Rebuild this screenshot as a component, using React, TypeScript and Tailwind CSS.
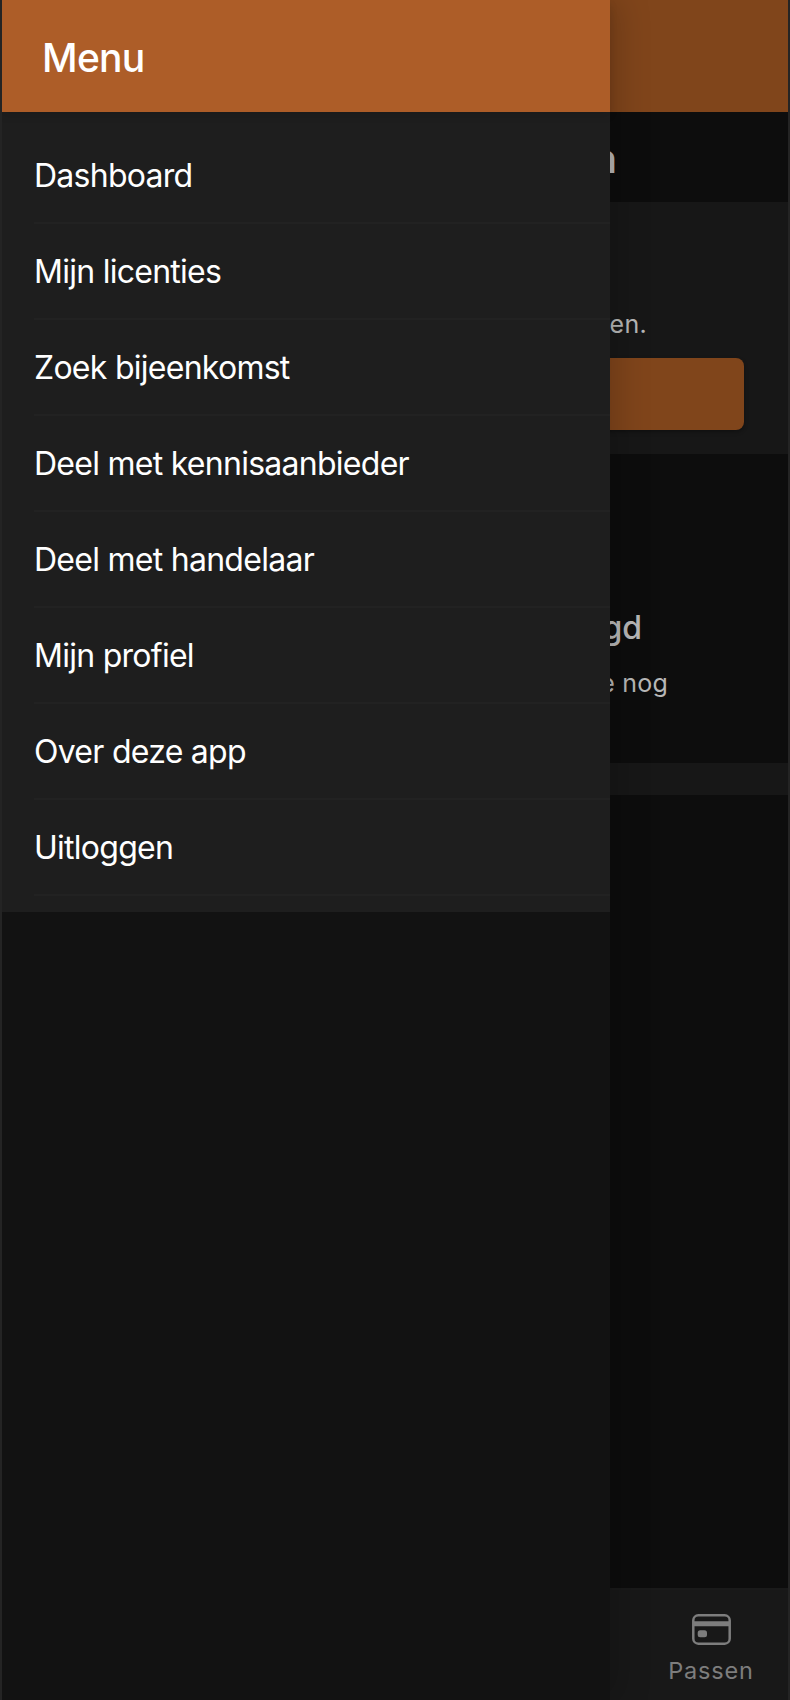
const items = [
  "Dashboard",
  "Mijn licenties",
  "Zoek bijeenkomst",
  "Deel met kennisaanbieder",
  "Deel met handelaar",
  "Mijn profiel",
  "Over deze app",
  "Uitloggen",
];

function Drawer() {
  return (
    <aside className="z-10 flex w-[608px] shrink-0 flex-col bg-[#121212] shadow-[8px_0_32px_rgba(0,0,0,0.18)]">
      <header className="z-10 flex h-28 shrink-0 items-center bg-[#ad5d28] pt-[3px] pl-10 shadow-[0_4px_8px_rgba(0,0,0,0.1)]">
        <h1 className="text-[39px] leading-none font-medium tracking-[-0.7px]">Menu</h1>
      </header>
      <nav className="bg-[#1e1e1e] py-4">
        {items.map((label) => (
          <a
            key={label}
            className="ml-8 flex h-24 items-center border-b-2 border-[#222222] pt-0.5 text-[32px] tracking-[-0.73px]"
          >
            {label}
          </a>
        ))}
      </nav>
    </aside>
  );
}

function Page() {
  return (
    <main className="flex w-[178px] shrink-0 flex-col overflow-hidden bg-[#0d0d0d] text-[#b7b7b7]">
      <div className="h-28 shrink-0 bg-[#80451b]" />
      <div className="flex h-[90px] shrink-0 items-center justify-end pt-1 pr-[171px] text-[40px] font-semibold">
        <span>n</span>
      </div>
      <section className="flex h-[252px] shrink-0 flex-col bg-[#171717]">
        <p className="mt-[104px] flex h-9 justify-end pr-[141px] text-[25px] leading-9 tracking-[0.3px]">
          en.
        </p>
        <button className="mt-4 -ml-5 h-[72px] w-[154px] rounded-lg bg-[#80451b] shadow-[0_2px_4px_rgba(0,0,0,0.3)]" />
      </section>
      <section className="flex h-[309px] shrink-0 flex-col">
        <h2 className="mt-[154px] flex h-10 justify-end pr-[146px] text-[32px] leading-10 font-medium">
          gd
        </h2>
        <p className="mt-[17px] flex h-9 justify-end pr-[120px] text-[25px] leading-9 tracking-[0.2px] whitespace-nowrap">
          e nog
        </p>
      </section>
      <div className="h-8 shrink-0 bg-[#171717]" />
      <div className="grow" />
      <footer className="flex h-28 shrink-0 flex-col items-center border-t-2 border-[#1a1a1a] bg-[#181818] pt-6 pl-6 text-[#7d7d7d]">
        <svg width="39" height="31" viewBox="0 0 39 31" fill="none">
          <rect x="1.3" y="1.3" width="36.4" height="28.4" rx="5" stroke="currentColor" strokeWidth="2.5" />
          <path d="M1.5 9.7H37.5" stroke="currentColor" strokeWidth="5" />
          <rect x="5.7" y="16.3" width="9.3" height="7" rx="2.5" fill="currentColor" />
        </svg>
        <span className="mt-[10px] text-[23.5px] leading-8 tracking-[0.8px]">Passen</span>
      </footer>
    </main>
  );
}

export default function App() {
  return (
    <div className="flex h-[1700px] w-[790px] overflow-hidden border-x-2 border-[#242424] bg-[#0d0d0d] font-['Inter',sans-serif] text-white">
      <Drawer />
      <Page />
    </div>
  );
}
